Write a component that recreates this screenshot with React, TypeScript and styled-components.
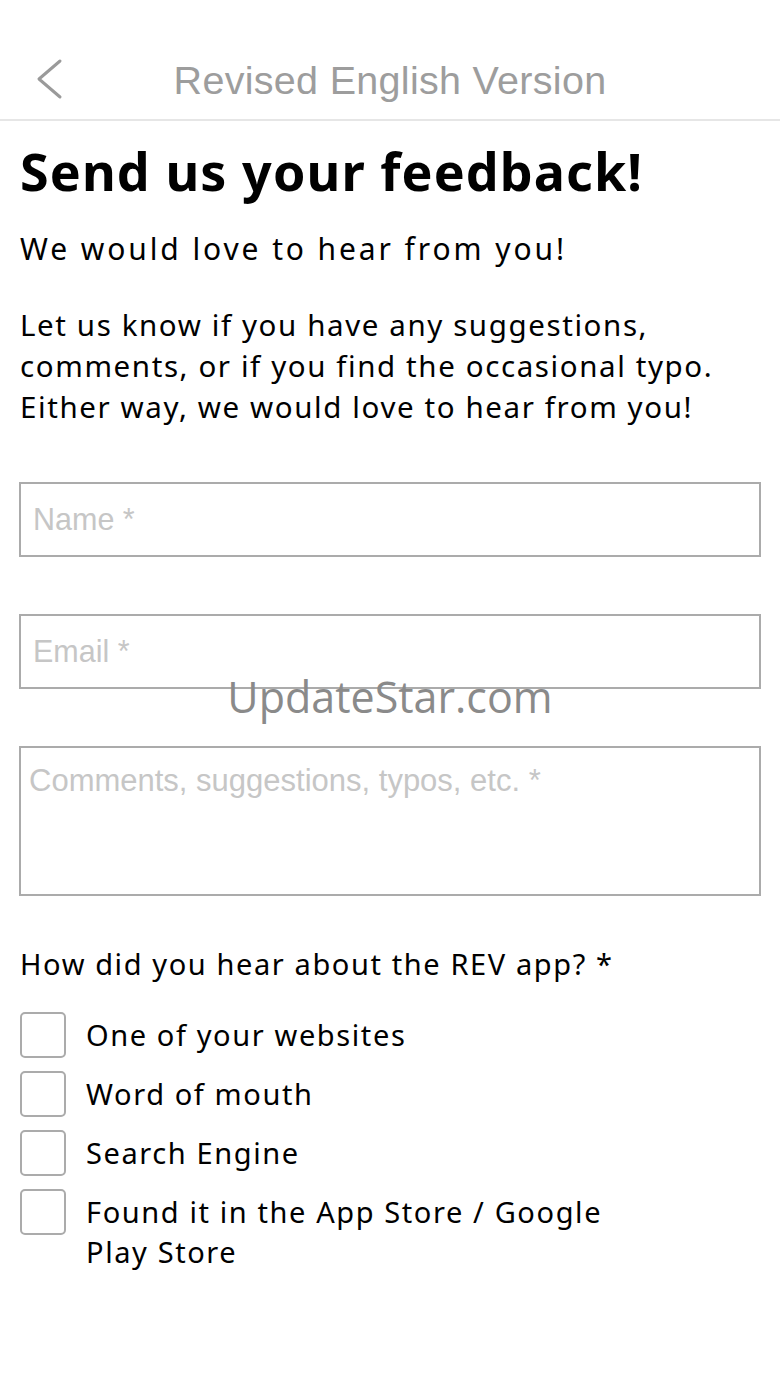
import * as React from 'react';
import styled, { createGlobalStyle } from 'styled-components';

const GlobalStyle = createGlobalStyle`
  html, body {
    margin: 0;
    padding: 0;
    background: #ffffff;
  }
  * {
    box-sizing: border-box;
  }
`;

const options = [
  'One of your websites',
  'Word of mouth',
  'Search Engine',
  'Found it in the App Store / Google Play Store',
];

export default function App() {
  return (
    <>
      <GlobalStyle />
      <Page>
        <TopBar>
          <BackButton aria-label="Back">
            <svg width="30" height="42" viewBox="0 0 30 42" fill="none">
              <path d="M26 3 L5 21 L26 39" stroke="#9a9a9a" strokeWidth="3" strokeLinecap="round" strokeLinejoin="round" />
            </svg>
          </BackButton>
          <BarTitle>Revised English Version</BarTitle>
        </TopBar>

        <Content>
          <Heading>Send us your feedback!</Heading>
          <SubHeading>We would love to hear from you!</SubHeading>
          <Intro>
            Let us know if you have any suggestions,
            <br />
            comments, or if you find the occasional typo.
            <br />
            Either way, we would love to hear from you!
          </Intro>

          <Form>
            <Field placeholder="Name *" />
            <Field placeholder="Email *" />
            <Comments placeholder="Comments, suggestions, typos, etc. *" />
          </Form>

          <Question>How did you hear about the REV app? *</Question>
          <OptionList>
            {options.map((label) => (
              <OptionRow key={label}>
                <Box type="checkbox" />
                <OptionLabel>{label}</OptionLabel>
              </OptionRow>
            ))}
          </OptionList>
        </Content>

        <Watermark>UpdateStar.com</Watermark>
      </Page>
    </>
  );
}

const Page = styled.div`
  position: relative;
  width: 780px;
  min-height: 1387px;
  background: #fff;
  font-family: 'Noto Sans', 'Open Sans', sans-serif;
  color: #000;
`;

const TopBar = styled.header`
  height: 121px;
  padding-top: 44px;
  display: flex;
  align-items: center;
  justify-content: center;
  position: relative;
  border-bottom: 2px solid #e6e6e6;
`;

const BackButton = styled.button`
  position: absolute;
  left: 34px;
  top: 58px;
  padding: 0;
  border: none;
  background: none;
  display: flex;
`;

const BarTitle = styled.h1`
  margin: 0 0 2px 0;
  font-family: 'Liberation Sans', Arial, sans-serif;
  font-weight: 400;
  font-size: 39.5px;
  color: #9d9d9d;
  letter-spacing: 0.3px;
`;

const Content = styled.main`
  padding: 18px 19px 0 20px;
`;

const Heading = styled.h2`
  margin: 0;
  font-weight: 700;
  font-size: 52px;
  line-height: 64px;
  letter-spacing: 1.1px;
`;

const SubHeading = styled.p`
  margin: 26px 0 0 0;
  font-size: 30px;
  line-height: 40px;
  letter-spacing: 2.9px;
`;

const Intro = styled.p`
  margin: 35px 0 0 0;
  font-size: 29.5px;
  line-height: 41px;
  letter-spacing: 1.6px;
  white-space: nowrap;
`;

const Form = styled.div`
  margin-top: 55px;
  display: flex;
  flex-direction: column;
  gap: 57px;
`;

const Field = styled.input`
  display: block;
  width: 742px;
  height: 75px;
  margin-left: -1px;
  border: 2px solid #ababab;
  border-radius: 0;
  padding: 0 12px;
  font-family: 'Liberation Sans', Arial, sans-serif;
  font-size: 30.5px;
  color: #333;
  outline: none;

  &::placeholder {
    color: #c6c6c6;
  }
`;

const Comments = styled.textarea`
  display: block;
  width: 742px;
  height: 150px;
  margin-left: -1px;
  border: 2px solid #ababab;
  border-radius: 0;
  padding: 15px 8px;
  font-family: 'Liberation Sans', Arial, sans-serif;
  font-size: 31px;
  line-height: 36px;
  resize: none;
  outline: none;

  &::placeholder {
    color: #c6c6c6;
  }
`;

const Question = styled.p`
  margin: 48px 0 0 0;
  font-size: 29px;
  line-height: 40px;
  letter-spacing: 1.6px;
`;

const OptionList = styled.div`
  margin-top: 28px;
  display: flex;
  flex-direction: column;
  gap: 13px;
`;

const OptionRow = styled.label`
  display: flex;
  align-items: flex-start;
  gap: 20px;
`;

const Box = styled.input`
  appearance: none;
  flex: none;
  width: 46px;
  height: 46px;
  margin: 0;
  border: 2px solid #ababab;
  border-radius: 5px;
  background: #fff;
`;

const OptionLabel = styled.span`
  font-size: 29px;
  line-height: 40px;
  letter-spacing: 1.6px;
  padding-top: 3px;
  max-width: 560px;
`;

const Watermark = styled.div`
  position: absolute;
  left: 0;
  right: 0;
  top: 667px;
  text-align: center;
  font-family: 'Open Sans', sans-serif;
  font-size: 43px;
  color: #8a8a8a;
  pointer-events: none;
`;
